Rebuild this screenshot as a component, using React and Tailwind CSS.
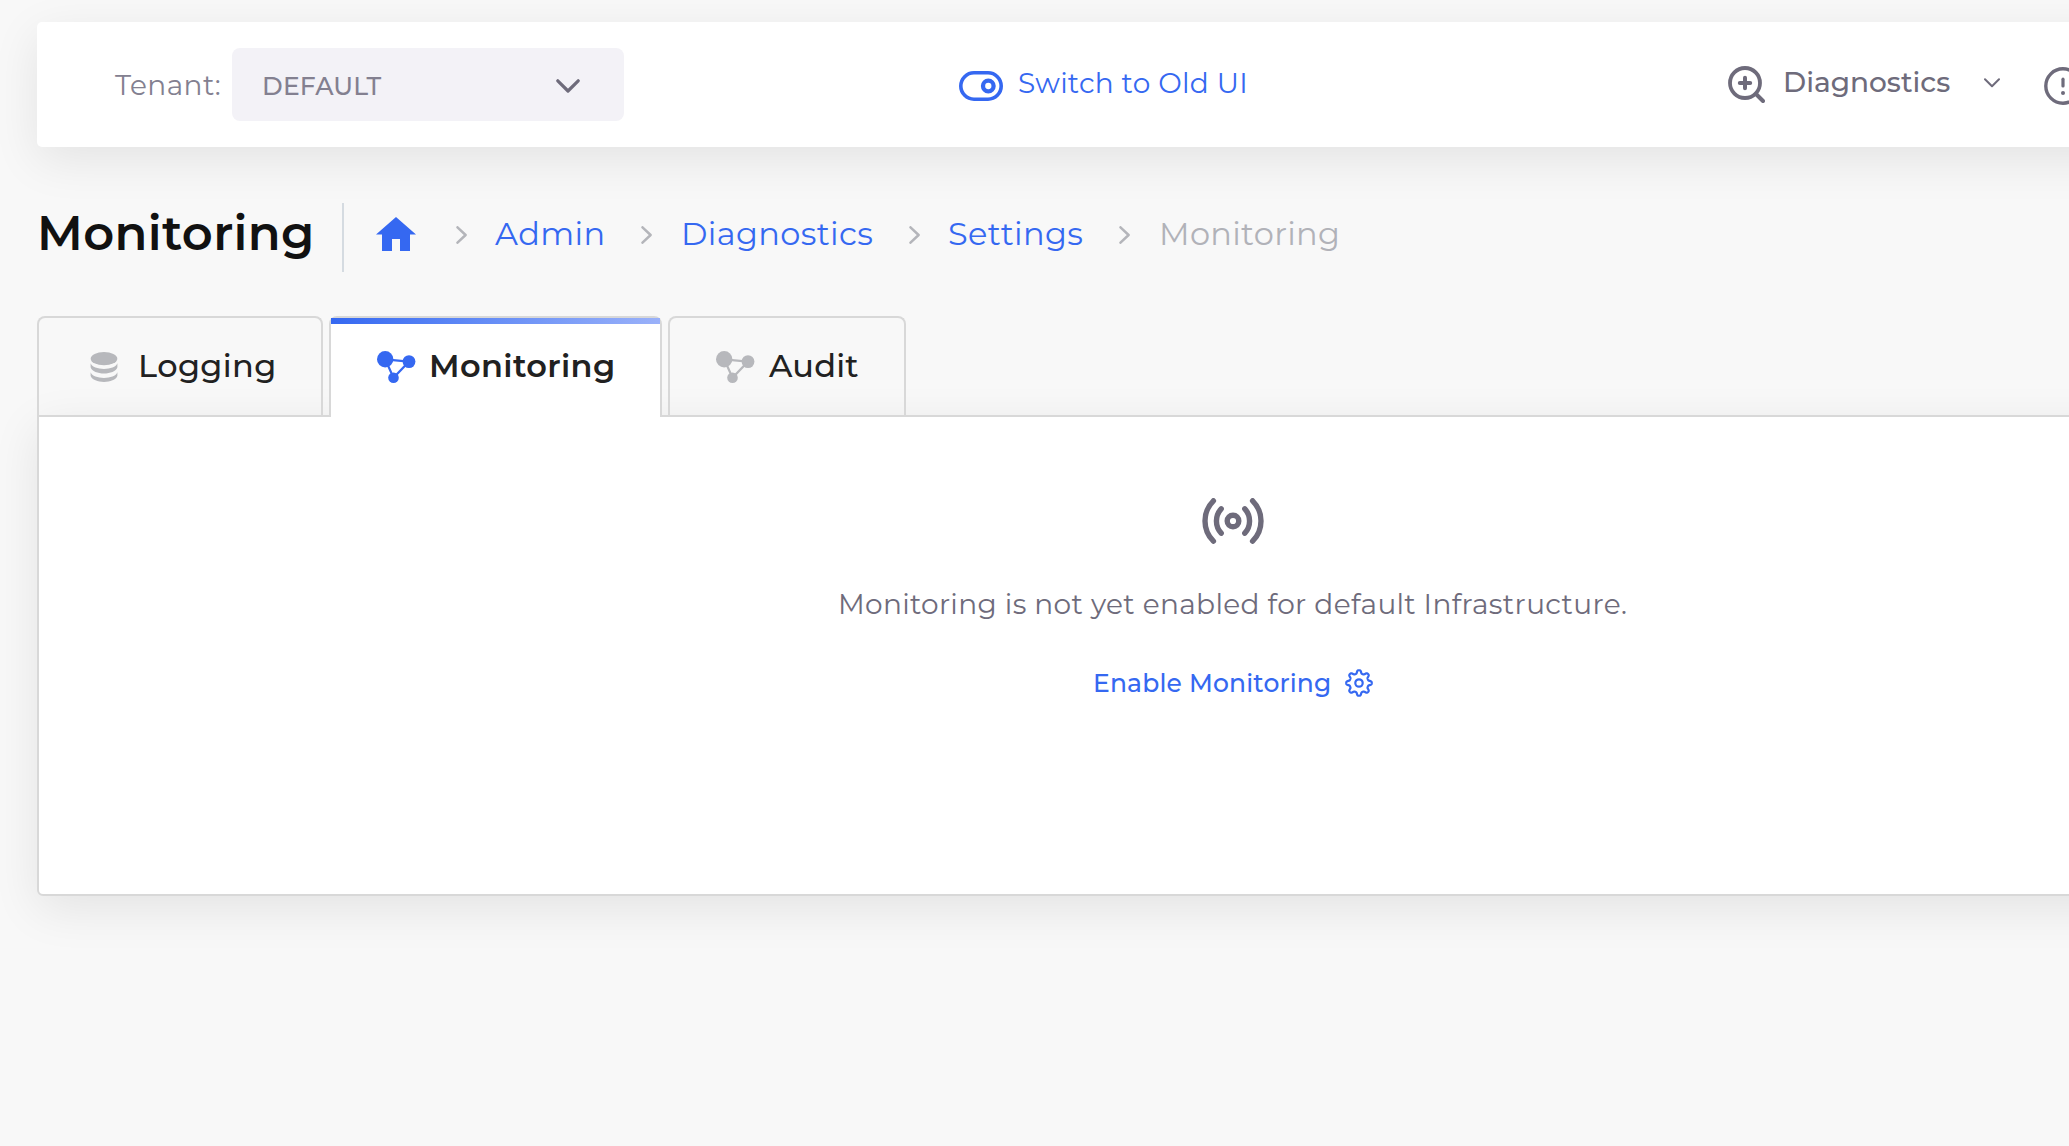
const GEAR = (() => {
  const pts = [];
  for (let i = 0; i < 192; i++) {
    const a = (i / 192) * Math.PI * 2;
    const wave = Math.tanh(1.8 * Math.cos(8 * a) - 0.2) / Math.tanh(1.8);
    const r = 11.2 + 1.6 * wave;
    pts.push(`${(14 + r * Math.cos(a)).toFixed(2)} ${(14 + r * Math.sin(a)).toFixed(2)}`);
  }
  return `M${pts.join("L")}Z`;
})();

function Label({ className, children }) {
  return <span className={`block shrink-0 whitespace-nowrap ${className}`}>{children}</span>;
}

function Separator({ className }) {
  return (
    <svg className={`mb-[5px] h-[18px] w-[11px] shrink-0 ${className}`} viewBox="0 0 11 18" fill="none" stroke="#b4b5ba" strokeWidth="2.5" strokeLinecap="round" strokeLinejoin="round">
      <path d="M1.5 1.3 9.6 9l-8.1 7.7" />
    </svg>
  );
}

function NetworkIcon({ className }) {
  return (
    <svg className={`h-8 w-[39px] shrink-0 ${className}`} viewBox="0 0 39 32" fill="currentColor">
      <path d="M8.2 8.3 32 10.6 16.5 26.7Z" fill="none" stroke="currentColor" strokeWidth="2.2" />
      <circle cx="8.2" cy="8.3" r="8.2" />
      <circle cx="32" cy="10.6" r="6.4" />
      <circle cx="16.5" cy="26.7" r="5.3" />
    </svg>
  );
}

function DatabaseIcon({ className }) {
  return (
    <svg className={`h-[30px] w-7 shrink-0 ${className}`} viewBox="0 0 28 30" fill="currentColor">
      <ellipse cx="14" cy="6.7" rx="13.3" ry="6.6" />
      <path d="M.6 11.3C3 18.8 25 18.8 27.4 11.3V15.3C25 23.6 3 23.6.6 15.3Z" />
      <path d="M.6 20.3C3 27.8 25 27.8 27.4 20.3V23.8C25 32 3 32 .6 23.8Z" />
    </svg>
  );
}

function Header() {
  return (
    <header className="flex h-[125px] w-[2392px] items-center rounded-[5px] bg-white pl-[78px] text-[#6e6b7b] shadow-[0_13px_48px_rgba(0,0,0,0.085)]">
      <Label className="w-[117px] text-[28px] tracking-[0.42px] text-[#838090]">Tenant:</Label>
      <div className="flex h-[73px] w-[392px] shrink-0 items-center rounded-lg bg-[#f3f2f7] pl-[30px]">
        <Label className="mt-[4px] w-[294px] text-[25px] font-medium tracking-[0.23px] text-[#838090]">DEFAULT</Label>
        <svg className="mt-[2px] h-[14px] w-6 shrink-0" viewBox="0 0 24 14" fill="none" stroke="currentColor" strokeWidth="3.2" strokeLinecap="round" strokeLinejoin="round">
          <path d="M1.8 1.8 12 12 22.2 1.8" />
        </svg>
      </div>
      <a className="ml-[335px] flex shrink-0 items-center text-[#3568f1]">
        <svg className="mt-[3px] h-[30px] w-11 shrink-0" viewBox="0 0 44 30" fill="none" stroke="currentColor">
          <rect x="1.8" y="1.8" width="40.4" height="26.4" rx="13.2" strokeWidth="3.6" />
          <circle cx="29.3" cy="15" r="5.3" strokeWidth="4.3" />
        </svg>
        <Label className="mb-[4px] ml-[15px] w-[232px] text-[28px] tracking-[0.3px]">Switch to Old UI</Label>
      </a>
      <svg className="ml-[478px] mt-px h-[38px] w-[37px] shrink-0" viewBox="0 0 37 38" fill="none" stroke="currentColor" strokeLinecap="round">
        <circle cx="17" cy="17" r="15" strokeWidth="3.8" />
        <path d="M17 11.8v10.4M11.8 17h10.4" strokeWidth="4" />
        <path d="m28 28 7 7" strokeWidth="4" />
      </svg>
      <Label className="mb-[6px] ml-[18px] w-[170px] text-[28px] font-medium">Diagnostics</Label>
      <svg className="mb-[4px] ml-[31px] h-[10px] w-4 shrink-0" viewBox="0 0 16 10" fill="none" stroke="currentColor" strokeWidth="2" strokeLinecap="round" strokeLinejoin="round">
        <path d="M1 1.3 8 8.2 15 1.3" />
      </svg>
      <svg className="ml-[44px] mt-[3px] h-[38px] w-[38px] shrink-0" viewBox="0 0 38 38" fill="none" stroke="currentColor" strokeLinecap="round">
        <circle cx="19" cy="19" r="17.2" strokeWidth="3.4" />
        <path d="M19 12.2v6.8" strokeWidth="3.2" />
        <circle cx="19" cy="26" r="2" fill="currentColor" stroke="none" />
      </svg>
    </header>
  );
}

function TitleRow() {
  return (
    <div className="mt-14 flex h-[69px] items-center text-[32px] tracking-[0.36px] text-[#3568f1]">
      <Label className="mb-[9px] w-[305px] text-[48px] font-semibold text-[#111111]">Monitoring</Label>
      <div className="h-full w-[2px] shrink-0 bg-[#d5dbe1]" />
      <svg className="mb-[7px] ml-8 h-[34px] w-10 shrink-0" viewBox="0 0 40 34" fill="currentColor">
        <path d="M20 0 40 17.6H34V34H24V22H16V34H6V17.6H0Z" />
      </svg>
      <Separator className="ml-10" />
      <Label className="mb-[8px] ml-7 w-[108px]">Admin</Label>
      <Separator className="ml-[38px]" />
      <Label className="mb-[8px] ml-[29px] w-[191px]">Diagnostics</Label>
      <Separator className="ml-[37px]" />
      <Label className="mb-[8px] ml-[28px] w-[135px]">Settings</Label>
      <Separator className="ml-[36px]" />
      <Label className="mb-[8px] ml-[29px] text-[#b1b2b8]">Monitoring</Label>
    </div>
  );
}

function Tabs() {
  const base = "flex items-center rounded-t-lg border-2 border-b-0 border-[#d8d8d8]";
  return (
    <nav className="mt-11 flex h-[99px] items-start gap-[6px] text-[32px] tracking-[0.38px] text-[#212121]">
      <div className={`${base} h-[99px] w-[286px] pl-[51px]`}>
        <DatabaseIcon className="text-[#b7b8bc]" />
        <Label className="mb-px ml-5 font-medium">Logging</Label>
      </div>
      <div className={`${base} relative z-10 h-[101px] w-[333px] bg-white pb-[2px] pl-[46px]`}>
        <div className="absolute inset-x-0 top-0 h-[6px] bg-linear-to-r from-[#3568f1] to-[#9ab1f9]" />
        <NetworkIcon className="text-[#3568f1]" />
        <Label className="mb-px ml-[13px] font-semibold">Monitoring</Label>
      </div>
      <div className={`${base} h-[99px] w-[238px] pl-[46px]`}>
        <NetworkIcon className="text-[#b7b8bc]" />
        <Label className="mb-px ml-[14px] font-medium tracking-[0.2px]">Audit</Label>
      </div>
    </nav>
  );
}

function Panel() {
  return (
    <section className="flex h-[481px] w-[2392px] flex-col items-center rounded-b-md border-2 border-[#d8d8d8] bg-white pt-[81px] text-[#6e6b7b] shadow-[0_13px_48px_rgba(0,0,0,0.085)]">
      <svg className="h-[46px] w-[62px] shrink-0" viewBox="0 0 62 46" fill="none" stroke="currentColor" strokeWidth="5.4" strokeLinecap="round">
        <path d="M11.4 2.8A28.5 28.5 0 0 0 11.4 43.2M50.6 2.8A28.5 28.5 0 0 1 50.6 43.2" />
        <path d="M19.2 10.8A18 18 0 0 0 19.2 35.2M42.8 10.8A18 18 0 0 1 42.8 35.2" />
        <circle cx="31" cy="23" r="5.8" />
      </svg>
      <Label className="mt-10 w-[790px] text-[28px] leading-10 tracking-[0.35px]">
        Monitoring is not yet enabled for default Infrastructure.
      </Label>
      <a className="mt-[41px] flex w-[280px] items-center justify-between text-[#3568f1]">
        <Label className="text-[25px] font-medium leading-9 tracking-[0.17px]">Enable Monitoring</Label>
        <svg className="mb-px h-7 w-7 shrink-0" viewBox="0 0 28 28" fill="none" stroke="currentColor" strokeWidth="2.2" strokeLinejoin="round">
          <path d={GEAR} />
          <circle cx="14" cy="14" r="3.7" />
        </svg>
      </a>
    </section>
  );
}

export default function App() {
  return (
    <div className="h-screen w-full overflow-hidden bg-[#f8f8f8] pl-[37px] pt-[22px] font-['Montserrat','Inter',sans-serif]">
      <Header />
      <TitleRow />
      <Tabs />
      <Panel />
    </div>
  );
}
